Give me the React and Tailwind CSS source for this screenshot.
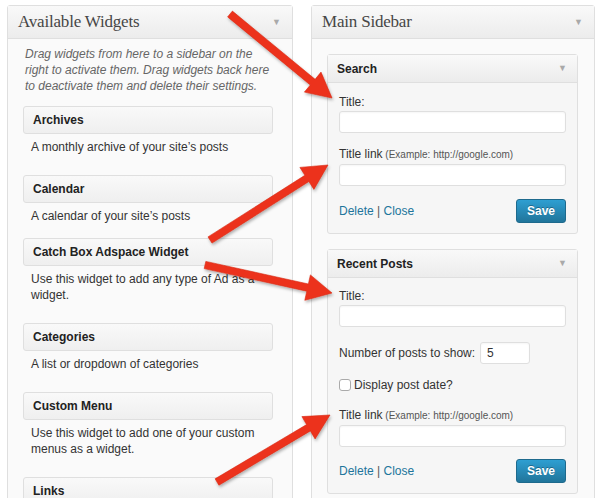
import React from 'react';

const sans = { fontFamily: '"Liberation Sans", Arial, sans-serif' };

const Caret = () => (
  <span className="text-[9px] leading-none text-[#a9a9a9]">▼</span>
);

const PanelHeader = ({ title }) => (
  <div className="flex h-[33px] items-center justify-between border-b border-[#dfdfdf] bg-gradient-to-b from-[#f9f9f9] to-[#ececec] pl-[10px] pr-[11px]">
    <span className="text-[17px] tracking-[-0.2px] text-[#464646]" style={{ fontFamily: '"Liberation Serif", Georgia, serif' }}>
      {title}
    </span>
    <Caret />
  </div>
);

const AvailableWidget = ({ name, desc, tight }) => (
  <div>
    <div className="flex h-[28px] items-center rounded-[3px] border border-[#dfdfdf] bg-gradient-to-b from-[#f9f9f9] to-[#efefef] pl-[9px] text-[12px] font-bold text-[#222]">
      {name}
    </div>
    <p className={`mt-[5px] pl-[8px] pr-2 text-[12px] leading-[16px] text-[#333] ${tight ? 'mb-[14px]' : 'mb-[20px]'}`}>{desc}</p>
  </div>
);

const TextInput = ({ value = '', className = 'w-full' }) => (
  <div className={`h-[22px] rounded-[3px] border border-[#dfdfdf] bg-white px-[6px] text-[12px] leading-[20px] text-[#333] shadow-[inset_0_1px_2px_rgba(0,0,0,0.04)] ${className}`}>
    {value}
  </div>
);

const Label = ({ children, hint }) => (
  <div className="text-[12px] leading-[16px] text-[#333]">
    {children}
    {hint && <span className="text-[10px] text-[#555]"> {hint}</span>}
  </div>
);

const Actions = () => (
  <div className="flex items-center justify-between">
    <span className="text-[12px] text-[#21759b]">
      Delete <span className="text-[#555]">|</span> Close
    </span>
    <button className="h-[24px] w-[50px] rounded-[3px] border border-[#1e6a8d] bg-gradient-to-b from-[#2e9fd2] to-[#21759b] text-[12px] font-bold text-white [text-shadow:0_-1px_0_rgba(0,0,0,0.3)]">
      Save
    </button>
  </div>
);

const SidebarWidget = ({ title, children, top = 'pt-[11px]' }) => (
  <div className="rounded-[3px] border border-[#dfdfdf] bg-[#f6f6f6]">
    <div className="flex h-[28px] items-center justify-between border-b border-[#dfdfdf] bg-gradient-to-b from-[#f9f9f9] to-[#ececec] pl-[9px] pr-[10px] text-[12px] font-bold text-[#222]">
      {title}
      <Caret />
    </div>
    <div className={`px-[11px] pb-[10px] ${top}`}>{children}</div>
  </div>
);

const arrows = [
  [230, 14, 332, 98],
  [210, 240, 328, 165],
  [205, 265, 332, 293],
  [217, 482, 330, 415],
];

function arrowPoints([tx, ty, px, py]) {
  const dx = px - tx;
  const dy = py - ty;
  const len = Math.hypot(dx, dy);
  const ux = dx / len;
  const uy = dy / len;
  const nx = -uy;
  const ny = ux;
  const L = 25;
  const hw = 13;
  const sw = 3.7;
  const bx = px - ux * L;
  const by = py - uy * L;
  const pts = [
    [tx + nx * sw, ty + ny * sw],
    [bx + nx * sw, by + ny * sw],
    [bx + nx * hw, by + ny * hw],
    [px, py],
    [bx - nx * hw, by - ny * hw],
    [bx - nx * sw, by - ny * sw],
    [tx - nx * sw, ty - ny * sw],
  ];
  return pts.map((p) => p.map((v) => v.toFixed(1)).join(',')).join(' ');
}

const Arrows = () => (
  <svg className="pointer-events-none absolute inset-0" width="600" height="498" viewBox="0 0 600 498">
    <defs>
      <filter id="shadow" x="-20%" y="-20%" width="140%" height="140%">
        <feDropShadow dx="1" dy="2" stdDeviation="1.5" floodColor="#000" floodOpacity="0.3" />
      </filter>
    </defs>
    {arrows.map((a, i) => (
      <polygon key={i} points={arrowPoints(a)} fill="#ec321c" stroke="#d92a14" strokeWidth="0.6" strokeLinejoin="round" filter="url(#shadow)" />
    ))}
  </svg>
);

export default function App() {
  return (
    <div className="relative h-[498px] w-[600px] overflow-hidden bg-white" style={sans}>
      <div className="flex gap-[18px] pt-[5px] pl-[7px]">
        {/* Available Widgets */}
        <div className="w-[286px] rounded-t-[3px] border border-[#dfdfdf] bg-[#fafafa]">
          <PanelHeader title="Available Widgets" />
          <div className="pt-[7px] pl-[15px] pr-[19px]">
            <p className="mb-[12px] pl-[2px] text-[12px] italic leading-[16px] text-[#666]">
              Drag widgets from here to a sidebar on the right to activate them. Drag widgets back here to deactivate them and delete their settings.
            </p>
            <AvailableWidget name="Archives" desc="A monthly archive of your site’s posts" />
            <AvailableWidget name="Calendar" desc="A calendar of your site’s posts" tight />
            <AvailableWidget name="Catch Box Adspace Widget" desc="Use this widget to add any type of Ad as a widget." />
            <AvailableWidget name="Categories" desc="A list or dropdown of categories" />
            <AvailableWidget name="Custom Menu" desc="Use this widget to add one of your custom menus as a widget." />
            <AvailableWidget name="Links" desc="Your blogroll" />
          </div>
        </div>

        {/* Main Sidebar */}
        <div className="w-[284px] rounded-t-[3px] border border-[#dfdfdf] bg-[#fafafa]">
          <PanelHeader title="Main Sidebar" />
          <div className="flex flex-col gap-[15px] pt-[15px] pl-[15px] pr-[16px] pb-4">
            <SidebarWidget title="Search">
              <Label>Title:</Label>
              <div className="mt-[1px] mb-[13px]"><TextInput /></div>
              <Label hint="(Example: http://google.com)">Title link</Label>
              <div className="mt-[1px] mb-[13px]"><TextInput /></div>
              <Actions />
            </SidebarWidget>

            <SidebarWidget title="Recent Posts" top="pt-[10px]">
              <Label>Title:</Label>
              <div className="mt-[1px] mb-[15px]"><TextInput /></div>
              <div className="mb-[13px] flex items-center gap-[5px] text-[12px] text-[#333]">
                Number of posts to show:
                <TextInput value="5" className="w-[50px]" />
              </div>
              <label className="mb-[14px] flex items-center gap-[3px] text-[12px] leading-[16px] text-[#333]">
                <span className="h-[12px] w-[12px] rounded-[3px] border border-[#aaa] bg-white" />
                Display post date?
              </label>
              <Label hint="(Example: http://google.com)">Title link</Label>
              <div className="mt-[1px] mb-[12px]"><TextInput /></div>
              <Actions />
            </SidebarWidget>
          </div>
        </div>
      </div>
      <Arrows />
    </div>
  );
}
